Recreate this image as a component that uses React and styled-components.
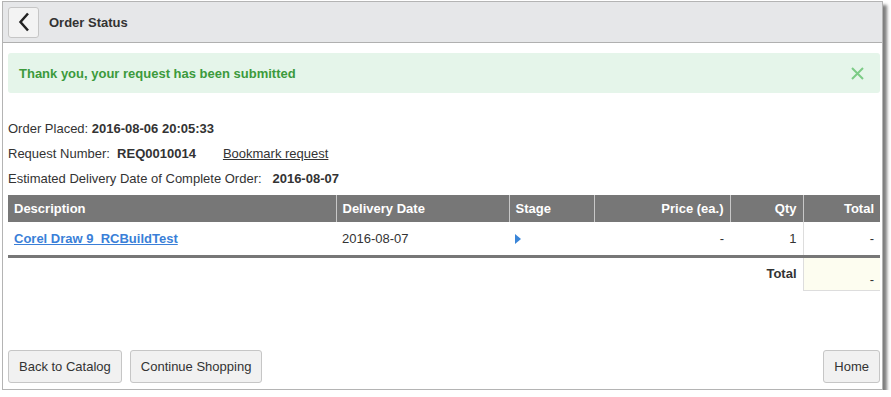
import React from 'react';
import styled, { createGlobalStyle } from 'styled-components';

const GlobalStyle = createGlobalStyle`
  html, body {
    margin: 0;
    padding: 0;
    background: #ffffff;
    font-family: "Liberation Sans", Arial, sans-serif;
    font-size: 13px;
    color: #333333;
  }
`;

const Window = styled.div`
  margin: 1px 0 0 2px;
  width: 879px;
  height: 387px;
  border: 1px solid #b4b4b4;
  background: #ffffff;
  box-shadow: 4px 4px 3px rgba(0, 0, 0, 0.5);
  display: flex;
  flex-direction: column;
`;

const TitleBar = styled.div`
  height: 40px;
  background: #e6e7e9;
  border-bottom: 1px solid #b0b0b0;
  display: flex;
  align-items: center;
  padding-left: 5px;
  gap: 10px;
`;

const IconButton = styled.button`
  width: 31px;
  height: 31px;
  padding: 0;
  border: 1px solid #c6c6c6;
  border-radius: 3px;
  background: #f3f3f3;
  display: flex;
  align-items: center;
  justify-content: center;
`;

const Title = styled.span`
  font-weight: bold;
  font-size: 13px;
  color: #333333;
`;

const Content = styled.div`
  flex: 1;
  display: flex;
  flex-direction: column;
  padding: 10px 2px 6px 5px;
`;

const Alert = styled.div`
  height: 40px;
  background: #e5f5ea;
  border-radius: 3px;
  display: flex;
  align-items: center;
  justify-content: space-between;
  padding: 0 16px 0 11px;
  color: #3c9a3c;
  font-weight: bold;
`;

const Info = styled.div`
  margin-top: 23px;
`;

const InfoLine = styled.div`
  height: 25px;
  line-height: 25px;
  white-space: pre;
`;

const Strong = styled.b`
  color: #333333;
`;

const PlainLink = styled.a`
  color: #333333;
  text-decoration: underline;
  margin-left: 27px;
`;

const Table = styled.table`
  margin-top: 4px;
  width: 100%;
  border-collapse: collapse;
  table-layout: fixed;
`;

const Row = styled.tr`
  height: 34px;
`;

const Th = styled.th`
  box-sizing: border-box;
  background: #777777;
  color: #ffffff;
  font-weight: bold;
  height: 27px;
  padding: 0 6px;
  text-align: ${(p) => p.$align || 'left'};
  border-left: ${(p) => (p.$first ? 'none' : '1px solid #c8c8c8')};
  width: ${(p) => (p.$w ? `${p.$w}px` : 'auto')};
`;

const Td = styled.td`
  padding: 0 6px;
  text-align: ${(p) => p.$align || 'left'};
  border-bottom: ${(p) => (p.$rule ? '3px solid #777777' : 'none')};
  border-left: ${(p) => (p.$divider ? '1px solid #dddddd' : 'none')};
  font-weight: ${(p) => (p.$bold ? 'bold' : 'normal')};
  vertical-align: middle;
`;

const TotalTd = styled(Td)`
  background: #fdfdf0;
  border-bottom: 1px solid #dddddd;
  vertical-align: bottom;
  padding-bottom: 3px;
`;

const ItemLink = styled.a`
  color: #3a7fd8;
  font-weight: bold;
  text-decoration: underline;
`;

const Footer = styled.div`
  margin-top: auto;
  display: flex;
  gap: 8px;
`;

const Button = styled.button`
  height: 33px;
  padding: 0 10px;
  border: 1px solid #c6c6c6;
  border-radius: 3px;
  background: #f1f1f1;
  font-family: inherit;
  font-size: 13px;
  color: #333333;
  margin-left: ${(p) => (p.$push ? 'auto' : '0')};
`;

export default function App() {
  return (
    <>
      <GlobalStyle />
      <Window>
        <TitleBar>
          <IconButton>
            <svg width="12" height="20" viewBox="0 0 12 20">
              <path d="M10 1.5 L2.5 10 L10 18.5" fill="none" stroke="#222" strokeWidth="2.5" />
            </svg>
          </IconButton>
          <Title>Order Status</Title>
        </TitleBar>
        <Content>
          <Alert>
            <span>Thank you, your request has been submitted</span>
            <svg width="13" height="13" viewBox="0 0 13 13">
              <path d="M1 1 L12 12 M12 1 L1 12" stroke="#7ccb86" strokeWidth="2" />
            </svg>
          </Alert>
          <Info>
            <InfoLine>Order Placed: <Strong>2016-08-06 20:05:33</Strong></InfoLine>
            <InfoLine>
              Request Number:  <Strong>REQ0010014</Strong>
              <PlainLink href="#">Bookmark request</PlainLink>
            </InfoLine>
            <InfoLine>Estimated Delivery Date of Complete Order:   <Strong>2016-08-07</Strong></InfoLine>
          </Info>
          <Table>
            <thead>
              <tr>
                <Th $first $w={328}>Description</Th>
                <Th $w={173}>Delivery Date</Th>
                <Th $w={85}>Stage</Th>
                <Th $w={136} $align="right">Price (ea.)</Th>
                <Th $w={73} $align="right">Qty</Th>
                <Th $align="right">Total</Th>
              </tr>
            </thead>
            <tbody>
              <Row>
                <Td $rule><ItemLink href="#">Corel Draw 9_RCBuildTest</ItemLink></Td>
                <Td $rule>2016-08-07</Td>
                <Td $rule>
                  <svg width="6" height="10" viewBox="0 0 6 10" style={{ marginTop: 5 }}>
                    <path d="M0 0 L6 5 L0 10 Z" fill="#3a85d8" />
                  </svg>
                </Td>
                <Td $rule $align="right">-</Td>
                <Td $rule $align="right">1</Td>
                <Td $rule $divider $align="right">-</Td>
              </Row>
              <Row>
                <Td />
                <Td />
                <Td />
                <Td />
                <Td $align="right" $bold>Total</Td>
                <TotalTd $divider $align="right">-</TotalTd>
              </Row>
            </tbody>
          </Table>
          <Footer>
            <Button>Back to Catalog</Button>
            <Button>Continue Shopping</Button>
            <Button $push>Home</Button>
          </Footer>
        </Content>
      </Window>
    </>
  );
}
